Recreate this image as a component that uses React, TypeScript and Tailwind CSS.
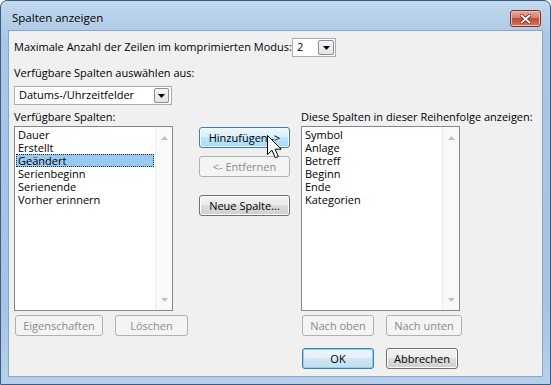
import React from "react";

type BtnKind = "normal" | "disabled" | "hover" | "default";

function Btn({ children, className, kind = "normal" }: { children: React.ReactNode; className: string; kind?: BtnKind }) {
  const k =
    kind === "disabled"
      ? "border-[#adb2b5] bg-[#f4f4f4] text-[#8a8a8a]"
      : kind === "hover"
      ? "border-[#3c7fb1] bg-[linear-gradient(#eaf6fd,#d9f0fc_50%,#bee6fd_50%,#a7d9f5)] text-black shadow-[inset_0_0_0_1px_#f2fafe]"
      : kind === "default"
      ? "border-[#3c7fb1] bg-[linear-gradient(#eef6fc,#e2eef8_50%,#d2e6f4_50%,#c6ddee)] text-black shadow-[inset_0_0_0_1px_#8fd0f5]"
      : "border-[#707070] bg-[linear-gradient(#f2f2f2,#ebebeb_50%,#dddddd_50%,#cfcfcf)] text-black shadow-[inset_0_0_0_1px_#fcfcfc]";
  return (
    <div className={`h-[21px] shrink-0 rounded-[3px] border flex items-center justify-center leading-none whitespace-nowrap ${k} ${className}`}>
      {children}
    </div>
  );
}

function DropBtn({ className }: { className: string }) {
  return (
    <div className={`border border-[#8a8d92] rounded-[2px] bg-[linear-gradient(#f6f6f6,#e4e4e4)] flex items-center justify-center ${className}`}>
      <svg width="7" height="4" viewBox="0 0 7 4">
        <path d="M0 0H7L3.5 4Z" fill="#000" />
      </svg>
    </div>
  );
}

function ScrollBar() {
  return (
    <div className="w-[17px] self-stretch bg-[#f9f9f9] border-l border-[#ececec] flex flex-col items-center justify-between pt-[9px] pb-[8px]">
      <svg width="7" height="4" viewBox="0 0 7 4">
        <path d="M0 4H7L3.5 0Z" fill="#c2c2c2" />
      </svg>
      <svg width="7" height="4" viewBox="0 0 7 4">
        <path d="M0 0H7L3.5 4Z" fill="#c2c2c2" />
      </svg>
    </div>
  );
}

function ListBox({ items, selected }: { items: string[]; selected?: number }) {
  return (
    <div className="h-[185px] border border-[#828790] bg-white flex">
      <div className="flex-1 flex flex-col pt-[1px] pl-[1px] pr-[1px]">
        {items.map((it, i) => (
          <div
            key={it}
            className={`h-[13px] leading-[13px] pl-[2px] whitespace-nowrap ${
              i === selected ? "bg-[#99c9ef] outline outline-1 outline-dotted outline-[#1c2a3a] -outline-offset-1" : ""
            }`}
          >
            {it}
          </div>
        ))}
      </div>
      <ScrollBar />
    </div>
  );
}

export default function App() {
  return (
    <div className="w-[551px] h-[385px] relative font-['Open_Sans',sans-serif] text-[11px] text-black overflow-hidden bg-white">
      <div className="w-[551px] h-[385px] rounded-t-[7px] border border-[#3e5c7e] bg-[linear-gradient(#c3d8ee,#a9c6e6_40px,#a6c3e4_300px,#b7d1ec)] flex flex-col">
        {/* Title bar */}
        <div className="h-[29px] flex items-start pl-[11px] pr-[9px]">
          <div className="flex-1 text-[11.5px] leading-none mt-[11px]">Spalten anzeigen</div>
          <div className="w-[31px] h-[17px] mt-[9px] rounded-[3px] border border-[#7f2f26] bg-[linear-gradient(#e9a99c,#d2806f_45%,#c14c3a_50%,#d2755f)] flex items-center justify-center shadow-[inset_0_0_0_1px_#f0bcb0]">
            <svg width="11" height="10" viewBox="0 0 11 10">
              <path d="M1.5 1.5L9.5 8.5M9.5 1.5L1.5 8.5" stroke="#5a1d15" strokeWidth="3.2" strokeLinecap="square" />
              <path d="M1.5 1.5L9.5 8.5M9.5 1.5L1.5 8.5" stroke="#ffffff" strokeWidth="1.8" strokeLinecap="square" />
            </svg>
          </div>
        </div>
        {/* Content */}
        <div className="mx-[7px] mb-[7px] flex-1 border border-[#8aa6c6] bg-[#f0f0f0] flex flex-col pl-[5px] pt-[7px]">
          <div className="flex items-center h-[19px]">
            <span className="w-[278px] whitespace-nowrap">Maximale Anzahl der Zeilen im komprimierten Modus:</span>
            <div className="w-[44px] h-[19px] border border-[#abadb3] bg-white flex items-center">
              <span className="pl-[4px] flex-1">2</span>
              <DropBtn className="w-[16px] h-[15px] mr-[1px]" />
            </div>
          </div>
          <div className="mt-[9px] h-[14px] leading-[14px] whitespace-nowrap">Verfügbare Spalten auswählen aus:</div>
          <div className="mt-[6px] w-[158px] h-[19px] border border-[#abadb3] bg-white flex items-center">
            <span className="pl-[4px] flex-1 whitespace-nowrap">Datums-/Uhrzeitfelder</span>
            <DropBtn className="w-[15px] h-[15px] mr-[2px]" />
          </div>
          <div className="mt-[5px] flex">
            {/* left column */}
            <div className="w-[159px] shrink-0 flex flex-col">
              <div className="h-[14px] leading-[14px] whitespace-nowrap">Verfügbare Spalten:</div>
              <div className="mt-[2px]">
                <ListBox
                  items={["Dauer", "Erstellt", "Geändert", "Serienbeginn", "Serienende", "Vorher erinnern"]}
                  selected={2}
                />
              </div>
              <div className="mt-[4px] flex pl-[1px] gap-[12px]">
                <Btn kind="disabled" className="w-[88px]">Eigenschaften</Btn>
                <Btn kind="disabled" className="w-[73px]">Löschen</Btn>
              </div>
            </div>
            {/* middle column */}
            <div className="ml-[26px] w-[91px] shrink-0 flex flex-col pt-[17px]">
              <Btn kind="hover" className="w-[91px]">Hinzufügen -&gt;</Btn>
              <Btn kind="disabled" className="w-[91px] mt-[8px]">&lt;- Entfernen</Btn>
              <Btn kind="normal" className="w-[91px] mt-[18px]">Neue Spalte...</Btn>
            </div>
            {/* right column */}
            <div className="ml-[11px] w-[159px] shrink-0 flex flex-col">
              <div className="h-[14px] leading-[14px] whitespace-nowrap">Diese Spalten in dieser Reihenfolge anzeigen:</div>
              <div className="mt-[2px]">
                <ListBox items={["Symbol", "Anlage", "Betreff", "Beginn", "Ende", "Kategorien"]} />
              </div>
              <div className="mt-[4px] flex pl-[1px] gap-[12px]">
                <Btn kind="disabled" className="w-[72px]">Nach oben</Btn>
                <Btn kind="disabled" className="w-[76px]">Nach unten</Btn>
              </div>
              <div className="mt-[12px] flex pl-[1px] gap-[12px]">
                <Btn kind="default" className="w-[72px]">OK</Btn>
                <Btn kind="normal" className="w-[72px]">Abbrechen</Btn>
              </div>
            </div>
          </div>
        </div>
      </div>
      {/* mouse cursor */}
      <svg className="absolute left-[267px] top-[135px]" width="15" height="24" viewBox="0 0 15 24">
        <path
          d="M0.5 0.5V19.5L5 15.2L8.3 22.8L11.3 21.5L8.1 14.2H14.2Z"
          fill="#ffffff"
          stroke="#000000"
          strokeWidth="1"
          strokeLinejoin="miter"
        />
      </svg>
    </div>
  );
}
